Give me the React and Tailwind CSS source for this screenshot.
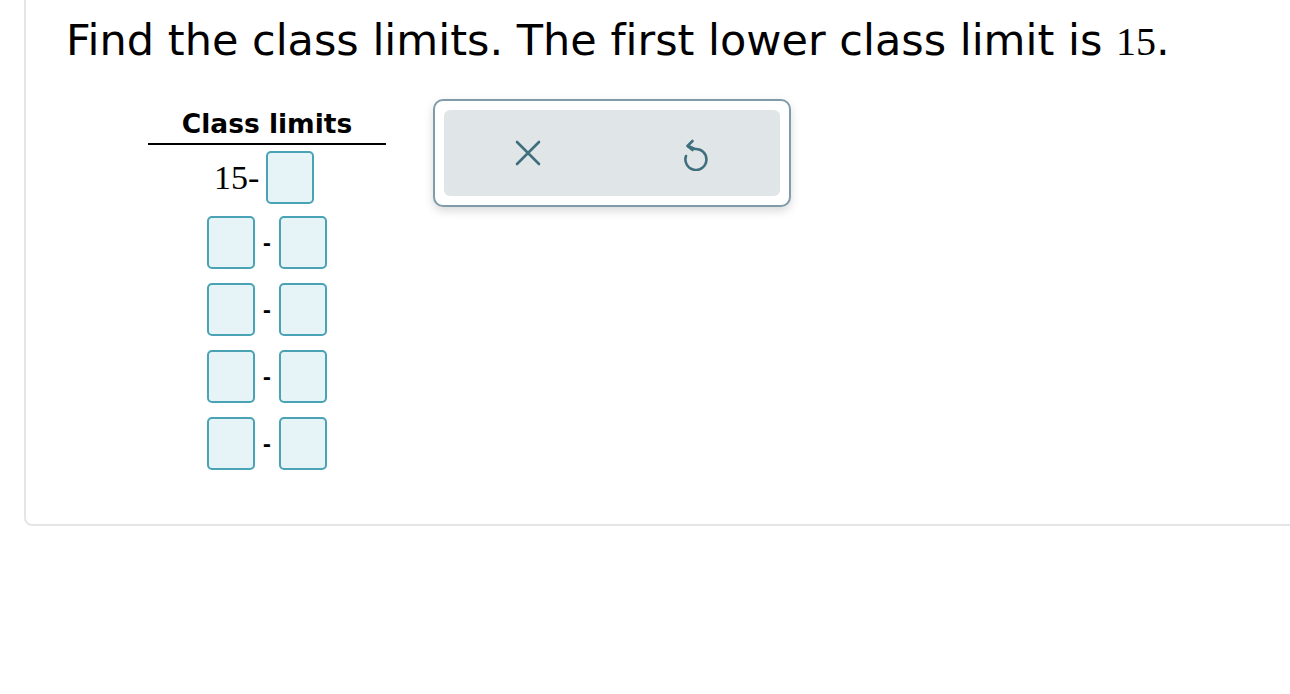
const ROWS = [0, 1, 2, 3];

function Box({ className = "" }) {
  return (
    <div className={"w-[48px] h-[53px] rounded-[5px] border-2 border-[#4aa3b4] bg-[#e6f4f8] " + className} />
  );
}

export default function App() {
  return (
    <div className="w-[1290px] h-[694px] bg-white overflow-hidden relative" style={{ fontFamily: '"DejaVu Sans", Verdana, sans-serif' }}>
      <div className="absolute left-[24px] top-[-20px] w-[1300px] h-[546px] rounded-[8px] border-2 border-[#e3e5e7]" />
      <div className="relative pl-[66px] pt-[14px]">
        <h1 className="text-[43px] leading-[52px] text-black [font-variant-ligatures:none]">
          Find the class limits. The first lower class limit is{" "}
          <span className="text-[40px]" style={{ fontFamily: '"Liberation Serif", serif' }}>15</span>.
        </h1>
        <div className="flex mt-[40px]">
          <div className="ml-[82px] w-[238px] flex flex-col items-start">
            <div className="w-full text-center font-bold text-[26.5px] leading-[32px] pb-[3px] border-b-2 border-black">Class limits</div>
            <div className="flex items-center mt-[6px] ml-[66px]">
              <span className="w-[52px] text-[34px] leading-none text-black" style={{ fontFamily: '"Liberation Serif", serif' }}>15-</span>
              <Box />
            </div>
            <div className="flex flex-col gap-[14px] mt-[12px] ml-[59px]">
              {ROWS.map((r) => (
                <div key={r} className="flex items-center">
                  <Box />
                  <span className="w-[24px] text-center text-[20px] font-bold leading-none">-</span>
                  <Box />
                </div>
              ))}
            </div>
          </div>
          <div className="ml-[47px] mt-[-9px] w-[358px] h-[108px] rounded-[10px] border-2 border-[#7f9ca8] bg-white p-[9px] shadow-[0_4px_10px_rgba(0,0,0,0.15)]">
            <div className="h-full rounded-[6px] bg-[#e0e6e8] flex items-center">
              <div className="flex-1 flex justify-center">
                <svg width="26" height="26" viewBox="0 0 26 26" fill="none" stroke="#3f6f7d" strokeWidth="2.6" strokeLinecap="round">
                  <path d="M2 2 L24 24 M24 2 L2 24" />
                </svg>
              </div>
              <div className="flex-1 flex justify-center">
                <svg width="30" height="36" viewBox="0 0 30 36" fill="none" stroke="#3f6f7d" strokeWidth="2.6" strokeLinecap="round" strokeLinejoin="round">
                  <path d="M11.5 6 L6.5 11 L11.5 15" />
                  <path d="M7 11 L14 14 A10.5 10.5 0 1 1 5 21" />
                </svg>
              </div>
            </div>
          </div>
        </div>
      </div>
    </div>
  );
}
